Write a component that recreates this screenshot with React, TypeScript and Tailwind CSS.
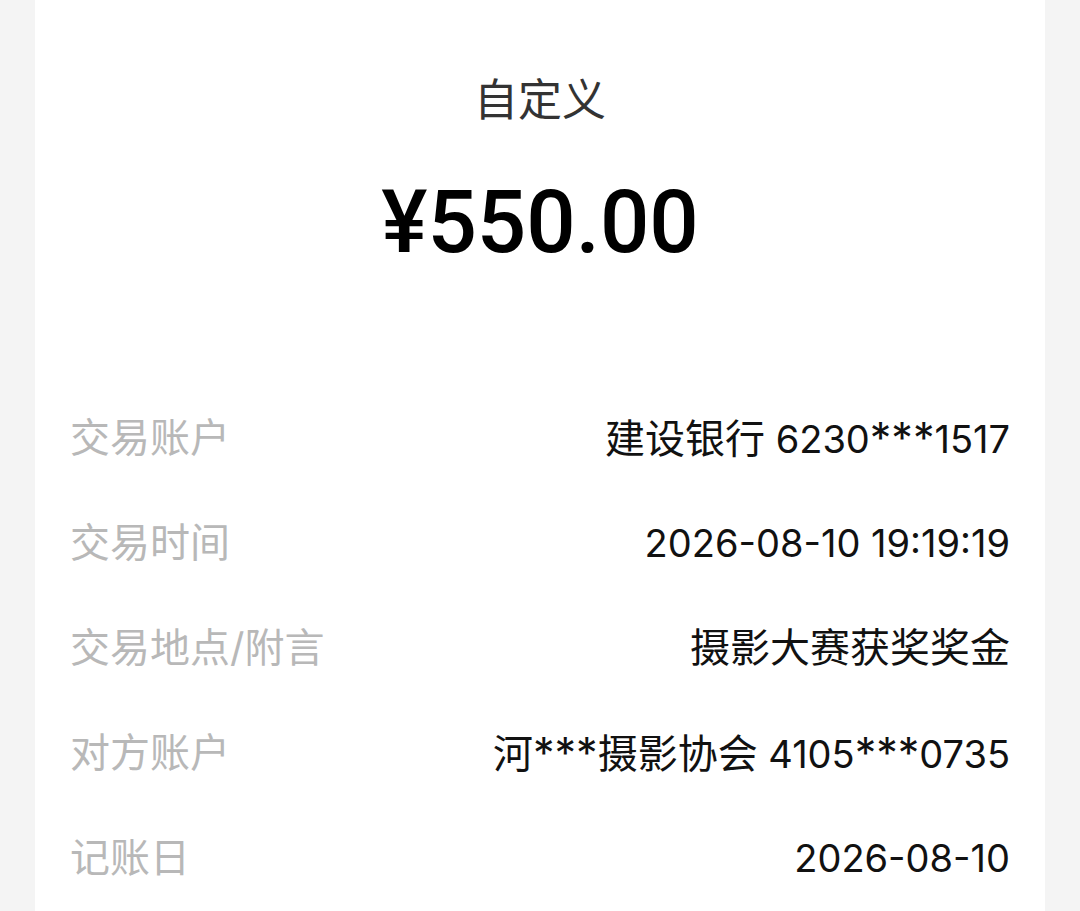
import React from "react";

const rows: [string, string][] = [
  ["交易账户", "建设银行 6230***1517"],
  ["交易时间", "2026-08-10 19:19:19"],
  ["交易地点/附言", "摄影大赛获奖奖金"],
  ["对方账户", "河***摄影协会 4105***0735"],
  ["记账日", "2026-08-10"],
];

function Value({ text }: { text: string }) {
  const parts = text.split(/([\u4e00-\u9fff]+|\*+)/).filter((p) => p.length > 0);
  return (
    <span className="text-[#111111] whitespace-pre">
      {parts.map((p, i) =>
        /[\u4e00-\u9fff]/.test(p) ? (
          <span key={i} className="text-[40px]">{p}</span>
        ) : /\*/.test(p) ? (
          <span key={i} className="text-[43px]">{p}</span>
        ) : (
          <span key={i} className="text-[38px]">{p}</span>
        )
      )}
    </span>
  );
}

export default function App() {
  return (
    <div
      className="min-h-[911px] w-full bg-[#f4f4f4] overflow-hidden"
      style={{ fontFamily: 'Inter, "Noto Sans CJK SC", sans-serif' }}
    >
      <div className="mx-auto w-[1010px] min-h-[911px] bg-white">
        <div className="pt-[78px] text-center text-[44px] leading-[44px] text-[#333333]">
          自定义
        </div>
        <div
          className="mt-[57px] text-center text-[87px] leading-[86px] font-medium text-black"
          style={{ fontFamily: 'Roboto, "Noto Sans CJK SC", sans-serif' }}
        >
          ¥550.00
        </div>
        <div className="mt-[120px] px-[35px]">
          {rows.map(([k, v]) => (
            <div key={k} className="flex h-[105px] items-center justify-between text-[40px] leading-[40px]">
              <span className="text-[#b8b8b8]">{k}</span>
              <Value text={v} />
            </div>
          ))}
        </div>
      </div>
    </div>
  );
}
